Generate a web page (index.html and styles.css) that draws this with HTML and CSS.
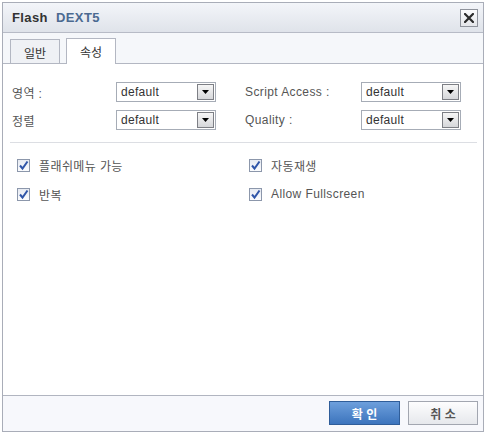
FILE: index.html
```html
<!DOCTYPE html>
<html lang="ko">
<head>
<meta charset="utf-8">
<title>Flash DEXT5</title>
<link rel="stylesheet" href="styles.css">
</head>
<body>
<div class="dialog">
  <div class="titlebar">
    <div class="title"><span class="t-main">Flash</span><span class="t-sub">DEXT5</span></div>
    <button class="close" type="button" aria-label="close">
      <svg width="10" height="10" viewBox="0 0 10 10"><path d="M1 1 L9 9 M9 1 L1 9" stroke="#2b2b2b" stroke-width="2.2" stroke-linecap="square"/></svg>
    </button>
  </div>
  <div class="tabs">
    <div class="tab">일반</div>
    <div class="tab active">속성</div>
  </div>
  <div class="content">
    <div class="form">
      <div class="label">영역 :</div>
      <div class="select"><span class="val">default</span><span class="arrow"><svg width="7" height="4" viewBox="0 0 7 4"><path d="M0 0 H7 L3.5 4 Z" fill="#000"/></svg></span></div>
      <div class="spacer"></div>
      <div class="label">Script Access :</div>
      <div class="select"><span class="val">default</span><span class="arrow"><svg width="7" height="4" viewBox="0 0 7 4"><path d="M0 0 H7 L3.5 4 Z" fill="#000"/></svg></span></div>

      <div class="label">정렬</div>
      <div class="select"><span class="val">default</span><span class="arrow"><svg width="7" height="4" viewBox="0 0 7 4"><path d="M0 0 H7 L3.5 4 Z" fill="#000"/></svg></span></div>
      <div class="spacer"></div>
      <div class="label">Quality :</div>
      <div class="select"><span class="val">default</span><span class="arrow"><svg width="7" height="4" viewBox="0 0 7 4"><path d="M0 0 H7 L3.5 4 Z" fill="#000"/></svg></span></div>
    </div>
    <div class="sep"></div>
    <div class="checks">
      <label class="check"><span class="box"><svg width="11" height="11" viewBox="0 0 11 11"><path d="M2 5.5 L4.5 8.5 L9.5 1.5" stroke="#2f55a8" stroke-width="2" fill="none"/></svg></span><span>플래쉬메뉴 가능</span></label>
      <label class="check"><span class="box"><svg width="11" height="11" viewBox="0 0 11 11"><path d="M2 5.5 L4.5 8.5 L9.5 1.5" stroke="#2f55a8" stroke-width="2" fill="none"/></svg></span><span>자동재생</span></label>
      <label class="check"><span class="box"><svg width="11" height="11" viewBox="0 0 11 11"><path d="M2 5.5 L4.5 8.5 L9.5 1.5" stroke="#2f55a8" stroke-width="2" fill="none"/></svg></span><span>반복</span></label>
      <label class="check"><span class="box"><svg width="11" height="11" viewBox="0 0 11 11"><path d="M2 5.5 L4.5 8.5 L9.5 1.5" stroke="#2f55a8" stroke-width="2" fill="none"/></svg></span><span>Allow Fullscreen</span></label>
    </div>
  </div>
  <div class="footer">
    <button class="btn ok" type="button">확 인</button>
    <button class="btn cancel" type="button">취 소</button>
  </div>
</div>
</body>
</html>
```
FILE: styles.css
```css
html, body {
  margin: 0;
  padding: 0;
  background: #ffffff;
}
body {
  padding: 2px;
  font-family: "Liberation Sans", "Noto Sans CJK KR", sans-serif;
  font-size: 12px;
  color: #444;
}
.dialog {
  box-sizing: border-box;
  width: 482px;
  height: 430px;
  border: 1px solid #a9adb8;
  display: flex;
  flex-direction: column;
  background: #fff;
}
.titlebar {
  height: 29px;
  flex: none;
  border-bottom: 1px solid #b7bbc6;
  background: linear-gradient(#f3f5f9, #dfe3ea);
  display: flex;
  align-items: center;
  justify-content: space-between;
  padding: 0 5px 0 9px;
}
.title {
  display: flex;
  gap: 8px;
  font-weight: bold;
  font-size: 13px;
  letter-spacing: 0.4px;
}
.t-main { color: #333; }
.t-sub { color: #4b6a91; }
.close {
  box-sizing: border-box;
  width: 18px;
  height: 18px;
  margin: 0;
  padding: 0;
  border: 1px solid #8f939c;
  background: linear-gradient(#fbfbfc, #e4e6ea);
  display: flex;
  align-items: center;
  justify-content: center;
}
.tabs {
  height: 30px;
  flex: none;
  border-bottom: 1px solid #b3b7c2;
  background: #f5f7fa;
  display: flex;
  align-items: flex-end;
  gap: 6px;
  padding-left: 7px;
}
.tab {
  box-sizing: border-box;
  width: 50px;
  height: 24px;
  border: 1px solid #b3b7c2;
  border-bottom: none;
  background: #eff1f5;
  color: #333;
  display: flex;
  align-items: center;
  justify-content: center;
  padding-top: 1px;
}
.tab.active {
  height: 26px;
  margin-bottom: -1px;
  background: #fff;
  padding-top: 0;
}
.content {
  flex: 1;
  padding: 18px 6px 0 9px;
}
.form {
  display: grid;
  grid-template-columns: 104px 100px 29px 116px 100px;
  grid-auto-rows: 20px;
  row-gap: 8px;
  align-items: center;
}
.label {
  color: #555;
  letter-spacing: 0.4px;
}
.select {
  box-sizing: border-box;
  height: 20px;
  border: 1px solid #a6acb6;
  background: #fff;
  display: flex;
  align-items: center;
  justify-content: space-between;
  padding: 0 1px 0 4px;
}
.val {
  color: #333;
  letter-spacing: 0.3px;
}
.arrow {
  box-sizing: border-box;
  width: 17px;
  height: 16px;
  border: 1px solid #7d7f85;
  background: linear-gradient(#f6f6f6, #d6d7da);
  display: flex;
  align-items: center;
  justify-content: center;
}
.sep {
  height: 1px;
  background: #dcdee3;
  margin: 12px 0 0 -2px;
}
.checks {
  display: grid;
  grid-template-columns: 232px 1fr;
  grid-auto-rows: 16px;
  row-gap: 13px;
  padding: 14px 0 0 5px;
}
.check {
  display: flex;
  align-items: center;
  gap: 9px;
  color: #555;
  letter-spacing: 0.4px;
}
.box {
  box-sizing: border-box;
  width: 13px;
  height: 13px;
  border: 1px solid #8c97ab;
  background: linear-gradient(#e6eaf2, #fbfcfe);
  display: flex;
  align-items: center;
  justify-content: center;
}
.footer {
  box-sizing: border-box;
  height: 36px;
  flex: none;
  border-top: 1px solid #b1b5c0;
  background: #f7f8fc;
  display: flex;
  justify-content: flex-end;
  align-items: flex-start;
  gap: 8px;
  padding: 5px 5px 0 0;
}
.btn {
  box-sizing: border-box;
  height: 24px;
  margin: 0;
  padding: 0;
  font-family: "Noto Sans CJK KR", sans-serif;
  font-size: 12px;
  font-weight: bold;
}
.ok {
  width: 71px;
  border: 1px solid #2f5d99;
  background: linear-gradient(#6d9fdc, #3c74bd);
  color: #fff;
}
.cancel {
  width: 70px;
  border: 1px solid #a2a6b0;
  background: linear-gradient(#fdfdfe, #e6e8ec);
  color: #555;
}
```
